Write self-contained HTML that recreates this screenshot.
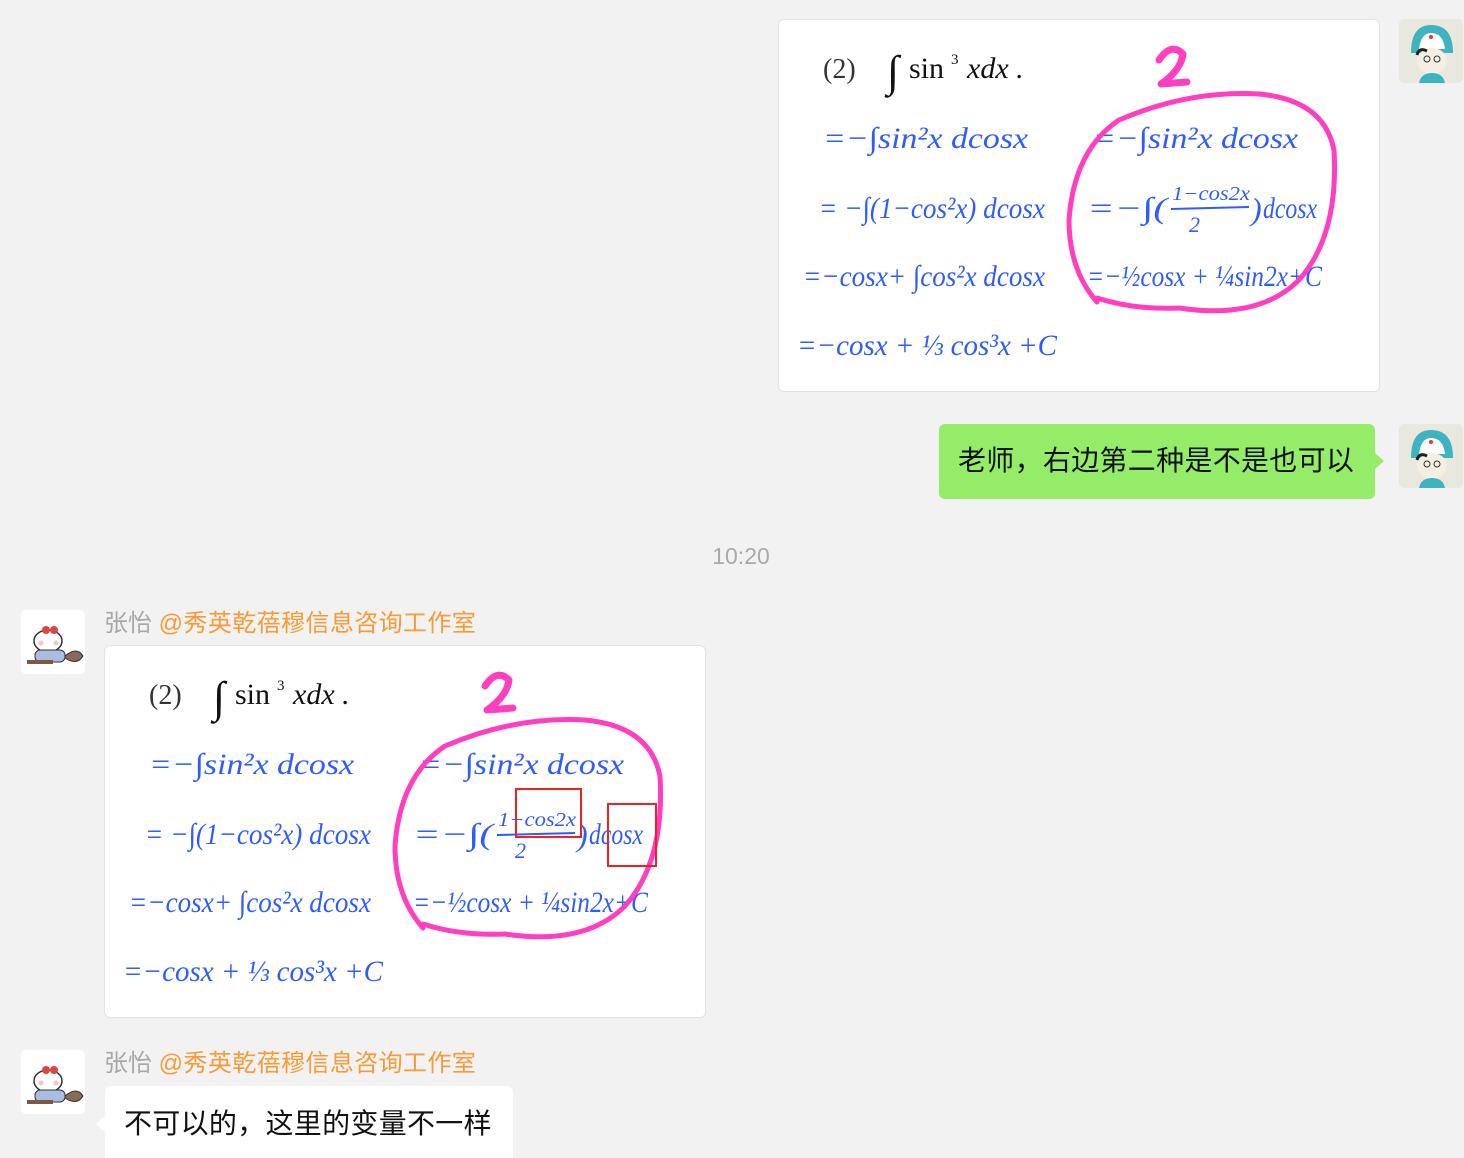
<!DOCTYPE html>
<html style="height:1158px;overflow:hidden;"><head><meta charset="utf-8">
<style>
html,body{margin:0;padding:0;}
body{width:1464px;height:1158px;background:#f2f2f2;position:relative;overflow:hidden;font-family:"Liberation Sans","Noto Sans CJK SC",sans-serif;}
.abs{position:absolute;}
.img{position:absolute;width:600px;height:371px;background:#fff;border:1px solid #e2e2e2;border-radius:6px;overflow:hidden;}
.av{position:absolute;width:64px;height:64px;border-radius:5px;overflow:hidden;}
.name{position:absolute;font-size:24px;color:#a8a8a8;white-space:nowrap;line-height:28px;}
.name span{color:#fa9a35;letter-spacing:0.4px;}
.hw{font-family:"Liberation Serif",serif;font-style:italic;fill:#2f5cff;}
</style></head><body>

<!-- right image -->
<div class="img" style="left:778px;top:19px;">
<svg width="602" height="373" viewBox="0 0 602 373">
<text x="44" y="58" font-family="Liberation Serif,serif" font-size="28" fill="#333">(2)</text>
<text x="108" y="66" font-family="Liberation Serif,serif" font-size="44" fill="#111">∫</text>
<text x="130" y="58" font-family="Liberation Serif,serif" font-size="30" fill="#111">sin</text>
<text x="172" y="44" font-family="Liberation Serif,serif" font-size="15" fill="#111">3</text>
<text x="188" y="58" font-family="Liberation Serif,serif" font-style="italic" font-size="30" fill="#111">xdx .</text>
<text class="hw" x="44" y="128" font-size="30" textLength="205" lengthAdjust="spacingAndGlyphs">=−∫sin²x dcosx</text>
<text class="hw" x="40" y="198" font-size="30" textLength="226" lengthAdjust="spacingAndGlyphs">= −∫(1−cos²x) dcosx</text>
<text class="hw" x="24" y="266" font-size="30" textLength="242" lengthAdjust="spacingAndGlyphs">=−cosx+ ∫cos²x dcosx</text>
<text class="hw" x="18" y="335" font-size="30" textLength="260" lengthAdjust="spacingAndGlyphs">=−cosx + ⅓ cos³x +C</text>
<text class="hw" x="314" y="128" font-size="30" textLength="205" lengthAdjust="spacingAndGlyphs">=−∫sin²x dcosx</text>
<text class="hw" x="308" y="198" font-size="30" textLength="80" lengthAdjust="spacingAndGlyphs">=−∫(</text>
<text class="hw" x="393" y="180" font-size="20" textLength="78" lengthAdjust="spacingAndGlyphs">1−cos2x</text>
<line x1="392" y1="189" x2="470" y2="187" stroke="#2f5cff" stroke-width="2"/>
<text class="hw" x="410" y="212" font-size="22">2</text>
<text class="hw" x="472" y="200" font-size="32">)</text>
<text class="hw" x="484" y="198" font-size="30" textLength="54" lengthAdjust="spacingAndGlyphs">dcosx</text>
<text class="hw" x="308" y="266" font-size="30" textLength="235" lengthAdjust="spacingAndGlyphs">=−½cosx + ¼sin2x+C</text>
<path d="M380 40 Q392 22 404 34 Q402 50 382 64 L408 62" fill="none" stroke="#ff3fbf" stroke-width="7" stroke-linecap="round" stroke-linejoin="round"/>
<path d="M318 278 Q355 290 400 288 Q480 300 520 260 Q560 215 555 130 Q545 80 480 74 Q410 70 340 100 Q295 130 290 200 Q290 250 318 282" fill="none" stroke="#ff3fbf" stroke-width="5" stroke-linecap="round"/>
</svg>
</div>
<div class="av" style="left:1399px;top:19px;">
<svg width="64" height="64"><rect width="64" height="64" fill="#e8e8de"/><path d="M12 34 Q12 6 32 6 Q54 6 54 34 Z" fill="#3fb3bf"/><path d="M20 30 Q22 14 32 14 Q44 14 46 30Z" fill="#fff"/><circle cx="32" cy="18" r="2" fill="#e33"/><ellipse cx="33" cy="42" rx="15" ry="13" fill="#f4efe2"/><path d="M18 36 Q20 28 28 32" stroke="#222" stroke-width="3" fill="none"/><circle cx="28" cy="40" r="3" fill="none" stroke="#333"/><circle cx="38" cy="40" r="3" fill="none" stroke="#333"/><path d="M20 64 Q22 54 33 54 Q44 54 46 64Z" fill="#3fb3bf"/></svg>
</div>

<!-- green bubble -->
<div class="abs" style="left:939px;top:424px;width:436px;height:75px;background:#95ec69;border-radius:6px;"></div>
<div class="abs" style="left:1375px;top:453px;width:0;height:0;border-top:8px solid transparent;border-bottom:8px solid transparent;border-left:9px solid #95ec69;"></div>
<div class="abs" style="left:958px;top:443px;font-size:28px;letter-spacing:0.3px;line-height:36px;color:#111;white-space:nowrap;">老师，右边第二种是不是也可以</div>
<div class="av" style="left:1399px;top:424px;">
<svg width="64" height="64"><rect width="64" height="64" fill="#e8e8de"/><path d="M12 34 Q12 6 32 6 Q54 6 54 34 Z" fill="#3fb3bf"/><path d="M20 30 Q22 14 32 14 Q44 14 46 30Z" fill="#fff"/><circle cx="32" cy="18" r="2" fill="#e33"/><ellipse cx="33" cy="42" rx="15" ry="13" fill="#f4efe2"/><path d="M18 36 Q20 28 28 32" stroke="#222" stroke-width="3" fill="none"/><circle cx="28" cy="40" r="3" fill="none" stroke="#333"/><circle cx="38" cy="40" r="3" fill="none" stroke="#333"/><path d="M20 64 Q22 54 33 54 Q44 54 46 64Z" fill="#3fb3bf"/></svg>
</div>

<div class="abs" style="left:0;width:1482px;top:542px;text-align:center;font-size:23px;color:#a9a9a9;line-height:28px;">10:20</div>

<!-- left 1 -->
<div class="av" style="left:21px;top:610px;">
<svg width="64" height="64"><rect width="64" height="64" fill="#fff"/><ellipse cx="27" cy="31" rx="14" ry="11" fill="#fff" stroke="#333" stroke-width="1.5"/><circle cx="25" cy="20" r="4" fill="#d94848"/><circle cx="33" cy="20" r="4" fill="#d94848"/><circle cx="20" cy="33" r="2.5" fill="#f6c4c4"/><circle cx="35" cy="33" r="2.5" fill="#f6c4c4"/><rect x="14" y="40" width="30" height="12" rx="5" fill="#aabde0" stroke="#333"/><path d="M44 46 Q56 36 62 46 Q56 56 44 48Z" fill="#8a6a55" stroke="#333"/><rect x="6" y="50" width="26" height="4" fill="#7a5a45"/></svg>
</div>
<div class="name" style="left:104px;top:610px;">张怡 <span>@秀英乾蓓穆信息咨询工作室</span></div>
<div class="img" style="left:104px;top:645px;">
<svg width="602" height="373" viewBox="0 0 602 373">
<text x="44" y="58" font-family="Liberation Serif,serif" font-size="28" fill="#333">(2)</text>
<text x="108" y="66" font-family="Liberation Serif,serif" font-size="44" fill="#111">∫</text>
<text x="130" y="58" font-family="Liberation Serif,serif" font-size="30" fill="#111">sin</text>
<text x="172" y="44" font-family="Liberation Serif,serif" font-size="15" fill="#111">3</text>
<text x="188" y="58" font-family="Liberation Serif,serif" font-style="italic" font-size="30" fill="#111">xdx .</text>
<text class="hw" x="44" y="128" font-size="30" textLength="205" lengthAdjust="spacingAndGlyphs">=−∫sin²x dcosx</text>
<text class="hw" x="40" y="198" font-size="30" textLength="226" lengthAdjust="spacingAndGlyphs">= −∫(1−cos²x) dcosx</text>
<text class="hw" x="24" y="266" font-size="30" textLength="242" lengthAdjust="spacingAndGlyphs">=−cosx+ ∫cos²x dcosx</text>
<text class="hw" x="18" y="335" font-size="30" textLength="260" lengthAdjust="spacingAndGlyphs">=−cosx + ⅓ cos³x +C</text>
<text class="hw" x="314" y="128" font-size="30" textLength="205" lengthAdjust="spacingAndGlyphs">=−∫sin²x dcosx</text>
<text class="hw" x="308" y="198" font-size="30" textLength="80" lengthAdjust="spacingAndGlyphs">=−∫(</text>
<text class="hw" x="393" y="180" font-size="20" textLength="78" lengthAdjust="spacingAndGlyphs">1−cos2x</text>
<line x1="392" y1="189" x2="470" y2="187" stroke="#2f5cff" stroke-width="2"/>
<text class="hw" x="410" y="212" font-size="22">2</text>
<text class="hw" x="472" y="200" font-size="32">)</text>
<text class="hw" x="484" y="198" font-size="30" textLength="54" lengthAdjust="spacingAndGlyphs">dcosx</text>
<text class="hw" x="308" y="266" font-size="30" textLength="235" lengthAdjust="spacingAndGlyphs">=−½cosx + ¼sin2x+C</text>
<path d="M380 40 Q392 22 404 34 Q402 50 382 64 L408 62" fill="none" stroke="#ff3fbf" stroke-width="7" stroke-linecap="round" stroke-linejoin="round"/>
<path d="M318 278 Q355 290 400 288 Q480 300 520 260 Q560 215 555 130 Q545 80 480 74 Q410 70 340 100 Q295 130 290 200 Q290 250 318 282" fill="none" stroke="#ff3fbf" stroke-width="5" stroke-linecap="round"/>
<rect x="411" y="143" width="65" height="48" fill="none" stroke="#ee2222" stroke-width="2"/>
<rect x="503" y="158" width="48" height="62" fill="none" stroke="#ee2222" stroke-width="2"/>
</svg>
</div>

<!-- left 2 -->
<div class="av" style="left:21px;top:1050px;">
<svg width="64" height="64"><rect width="64" height="64" fill="#fff"/><ellipse cx="27" cy="31" rx="14" ry="11" fill="#fff" stroke="#333" stroke-width="1.5"/><circle cx="25" cy="20" r="4" fill="#d94848"/><circle cx="33" cy="20" r="4" fill="#d94848"/><circle cx="20" cy="33" r="2.5" fill="#f6c4c4"/><circle cx="35" cy="33" r="2.5" fill="#f6c4c4"/><rect x="14" y="40" width="30" height="12" rx="5" fill="#aabde0" stroke="#333"/><path d="M44 46 Q56 36 62 46 Q56 56 44 48Z" fill="#8a6a55" stroke="#333"/><rect x="6" y="50" width="26" height="4" fill="#7a5a45"/></svg>
</div>
<div class="name" style="left:104px;top:1050px;">张怡 <span>@秀英乾蓓穆信息咨询工作室</span></div>
<div class="abs" style="left:105px;top:1086px;width:408px;height:72px;background:#fff;border-radius:6px 6px 0 0;"></div>
<div class="abs" style="left:96px;top:1116px;width:0;height:0;border-top:8px solid transparent;border-bottom:8px solid transparent;border-right:9px solid #fff;"></div>
<div class="abs" style="left:124px;top:1106px;font-size:28px;letter-spacing:0.3px;line-height:36px;color:#111;white-space:nowrap;">不可以的，这里的变量不一样</div>
</body></html>
